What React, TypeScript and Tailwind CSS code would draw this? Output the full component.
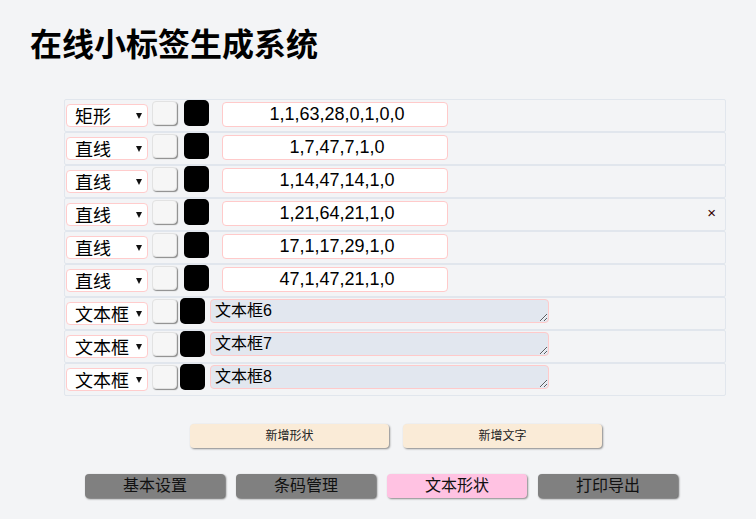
import React from "react";

type Item = { type: "矩形" | "直线" | "文本框"; value: string };

const items: Item[] = [
  { type: "矩形", value: "1,1,63,28,0,1,0,0" },
  { type: "直线", value: "1,7,47,7,1,0" },
  { type: "直线", value: "1,14,47,14,1,0" },
  { type: "直线", value: "1,21,64,21,1,0" },
  { type: "直线", value: "17,1,17,29,1,0" },
  { type: "直线", value: "47,1,47,21,1,0" },
  { type: "文本框", value: "文本框6" },
  { type: "文本框", value: "文本框7" },
  { type: "文本框", value: "文本框8" },
];

const tabs = ["基本设置", "条码管理", "文本形状", "打印导出"];

function TypeSelect({ value }: { value: string }) {
  return (
    <div className="relative ml-[1px] mt-[4px] h-[23px] w-[82px] shrink-0">
      <select
        defaultValue={value}
        className="h-full w-full appearance-none rounded-[4px] border border-[#ffcccc] bg-white pl-[8px] pt-[3px] text-[18px] leading-none text-black outline-none"
      >
        <option>矩形</option>
        <option>直线</option>
        <option>文本框</option>
      </select>
      <svg
        className="pointer-events-none absolute right-[6px] top-[9px]"
        width="6"
        height="6"
        viewBox="0 0 6 6"
      >
        <polygon points="0,0 6,0 3,6" fill="#111" />
      </svg>
    </div>
  );
}

function ShapeRow({ item, showClose }: { item: Item; showClose?: boolean }) {
  const isText = item.type === "文本框";
  return (
    <div className="flex h-[33px] items-start rounded-[2px] border border-[#e1e6ed]">
      <TypeSelect value={item.type} />
      <button className="ml-[4px] mt-[1px] h-[24px] w-[25px] shrink-0 rounded-[4px] border border-[#e2e2e2] bg-[#f6f6f6] shadow-[1px_1px_1px_#8a8a8a]" />
      {isText ? (
        <>
          <div className="ml-[3px] h-[26px] w-[25px] shrink-0 rounded-[5px] bg-black" />
          <textarea
            defaultValue={item.value}
            className="ml-[5px] mt-[1px] h-[24px] w-[339px] shrink-0 rounded-[4px] border border-[#ffcaca] bg-[#e2e7ef] pl-[4px] pt-[1px] text-[16px] leading-[20px] text-black outline-none"
          />
        </>
      ) : (
        <>
          <div className="ml-[7px] h-[26px] w-[25px] shrink-0 rounded-[5px] bg-black" />
          <input
            defaultValue={item.value}
            className="ml-[13px] mt-[2px] h-[25px] w-[226px] shrink-0 rounded-[4px] border border-[#ffcaca] bg-white pl-[4px] text-center text-[18px] text-black outline-none"
          />
        </>
      )}
      {showClose && (
        <span className="ml-auto mr-[9px] mt-[5px] text-[15px] leading-[18px] text-[#300]">
          ×
        </span>
      )}
    </div>
  );
}

export default function App() {
  return (
    <div
      className="min-h-screen bg-[#f3f4f6] text-black"
      style={{ fontFamily: '"Liberation Sans", "Noto Sans CJK SC", sans-serif' }}
    >
      <h1 className="pl-[30px] pt-[26px] text-[32px] font-bold leading-[38px]">
        在线小标签生成系统
      </h1>

      <div className="ml-[64px] mt-[35px] w-[662px]">
        {items.map((item, i) => (
          <ShapeRow key={i} item={item} showClose={i === 3} />
        ))}
      </div>

      <div className="ml-[190px] mt-[28px] flex gap-[14px]">
        <button className="h-[24px] w-[199px] rounded-[4px] bg-[#faebd7] text-[12px] text-[#222] shadow-[1px_1px_2px_#888]">
          新增形状
        </button>
        <button className="h-[24px] w-[199px] rounded-[4px] bg-[#faebd7] text-[12px] text-[#222] shadow-[1px_1px_2px_#888]">
          新增文字
        </button>
      </div>

      <div className="ml-[85px] mt-[26px] flex gap-[11px]">
        {tabs.map((t) => (
          <button
            key={t}
            className={
              t === "文本形状"
                ? "h-[24px] w-[140px] rounded-[4px] bg-[#ffc2e2] text-[16px] leading-none text-[#111] shadow-[1px_1px_2px_#888]"
                : "h-[24px] w-[140px] rounded-[4px] bg-[#808080] text-[16px] leading-none text-[#111] shadow-[1px_1px_2px_#666]"
            }
          >
            {t}
          </button>
        ))}
      </div>
    </div>
  );
}
